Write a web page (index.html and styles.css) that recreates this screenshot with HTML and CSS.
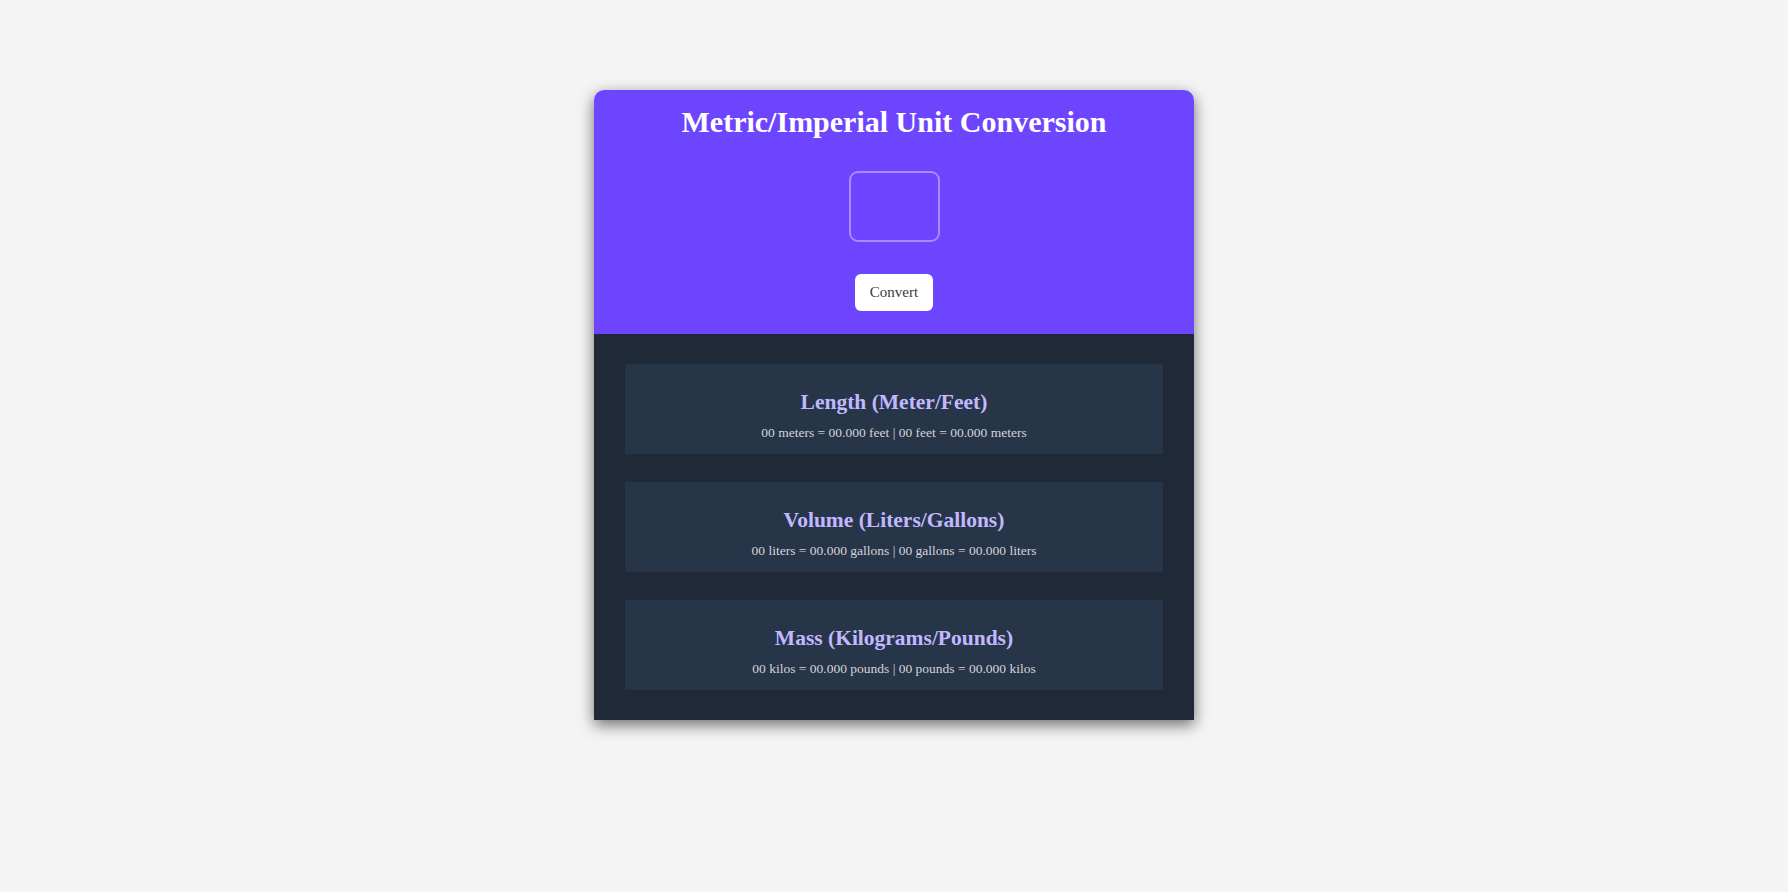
FILE: index.html
```html
<!DOCTYPE html>
<html lang="en">
<head>
<meta charset="utf-8">
<title>Metric/Imperial Unit Conversion</title>
<link rel="stylesheet" href="styles.css">
</head>
<body>
<main class="card">
  <header class="card-head">
    <h1 class="title">Metric/Imperial Unit Conversion</h1>
    <input class="num-input" type="text" aria-label="Value">
    <button class="convert-btn" type="button">Convert</button>
  </header>
  <section class="results">
    <div class="result">
      <h2 class="result-title">Length (Meter/Feet)</h2>
      <p class="result-text">00 meters = 00.000 feet | 00 feet = 00.000 meters</p>
    </div>
    <div class="result">
      <h2 class="result-title">Volume (Liters/Gallons)</h2>
      <p class="result-text">00 liters = 00.000 gallons | 00 gallons = 00.000 liters</p>
    </div>
    <div class="result">
      <h2 class="result-title">Mass (Kilograms/Pounds)</h2>
      <p class="result-text">00 kilos = 00.000 pounds | 00 pounds = 00.000 kilos</p>
    </div>
  </section>
</main>
</body>
</html>
```

FILE: styles.css
```css
* { box-sizing: border-box; }

html, body {
  margin: 0;
  padding: 0;
}

body {
  background: #f4f4f4;
  font-family: "Liberation Serif", "Times New Roman", serif;
  display: flex;
  justify-content: center;
  padding-top: 90px;
  min-height: 892px;
}

.card {
  width: 600px;
  height: 630px;
  border-radius: 10px 10px 0 0;
  overflow: hidden;
  box-shadow: 0 5px 15px rgba(0, 0, 0, 0.55);
  display: flex;
  flex-direction: column;
}

.card-head {
  background: #6e45ff;
  height: 244px;
  padding-top: 15px;
  display: flex;
  flex-direction: column;
  align-items: center;
}

.title {
  margin: 0;
  color: #ffffff;
  font-size: 30px;
  line-height: 34px;
  font-weight: bold;
}

.num-input {
  margin-top: 32px;
  width: 91px;
  height: 71px;
  background: transparent;
  border: 2px solid #a58cff;
  border-radius: 9px;
  outline: none;
  color: #fff;
  font-family: inherit;
  font-size: 20px;
  text-align: center;
}

.convert-btn {
  margin-top: 32px;
  height: 37px;
  padding: 0 15px;
  background: #ffffff;
  border: none;
  border-radius: 6px;
  color: #3a3a3a;
  font-family: inherit;
  font-size: 15px;
}

.results {
  flex: 1;
  background: #1f2937;
  padding: 30px 31px;
  display: flex;
  flex-direction: column;
  gap: 28px;
}

.result {
  height: 90px;
  background: #273549;
  padding-top: 26px;
  text-align: center;
}

.result-title {
  margin: 0;
  color: #c2b8ff;
  font-size: 21.5px;
  line-height: 25px;
  font-weight: bold;
}

.result-text {
  margin: 10px 0 0;
  color: #d4d4d8;
  font-size: 13.5px;
  line-height: 16px;
}
```
